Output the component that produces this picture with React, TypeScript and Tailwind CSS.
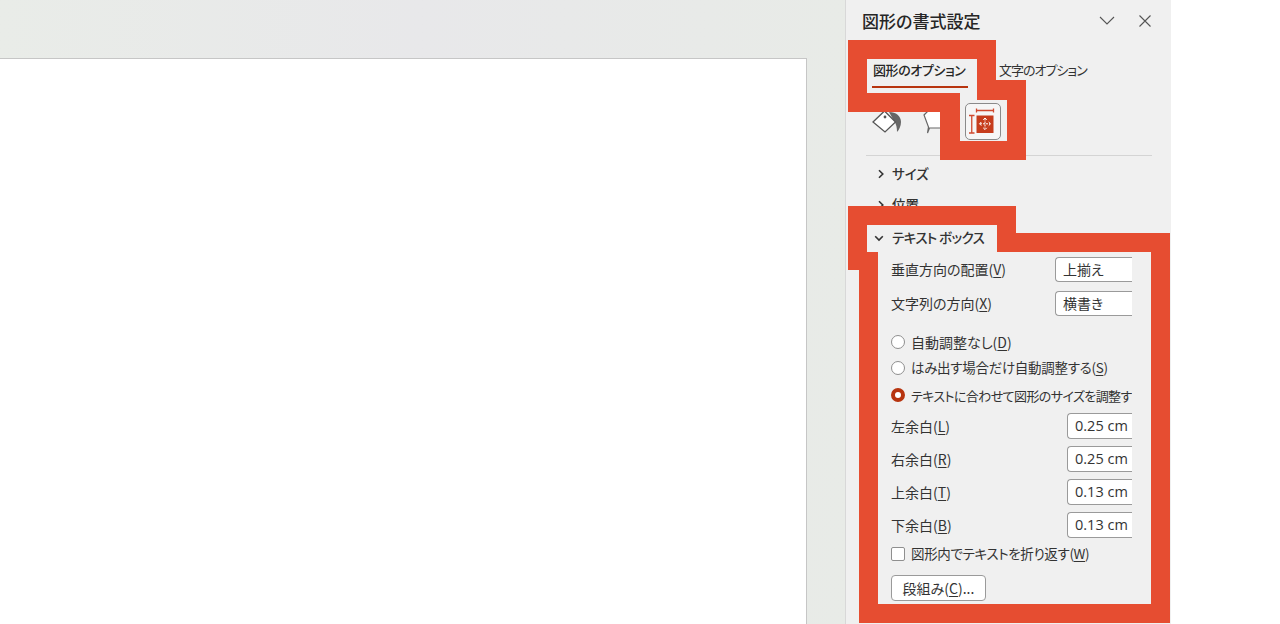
const fontStack = "font-['Noto_Sans_CJK_JP','Noto_Sans',sans-serif] [font-feature-settings:'palt']";

function Key({ label, k, tail = ")" }: { label: string; k: string; tail?: string }) {
  return (
    <span className="whitespace-nowrap">
      {label}(<span className="underline underline-offset-2">{k}</span>
      {tail}
    </span>
  );
}

function SelectRow({ label, k, value, className }: { label: string; k: string; value: string; className: string }) {
  return (
    <div className={`flex h-[25px] items-center justify-between ${className}`}>
      <span className="pb-[2px]">
        <Key label={label} k={k} />
      </span>
      <div className="flex h-[25px] w-[77px] shrink-0 items-center rounded-l-[4px] border border-r-0 border-[#9a9a9a] bg-white pb-[2px] pl-[7px] text-[#333]">
        {value}
      </div>
    </div>
  );
}

function MarginRow({ label, k, value, className }: { label: string; k: string; value: string; className: string }) {
  return (
    <div className={`flex h-[26px] items-center justify-between ${className}`}>
      <Key label={label} k={k} />
      <div className="flex h-[26px] w-[65px] shrink-0 items-center rounded-l-[4px] border border-r-0 border-[#9a9a9a] bg-white pl-[7px] font-['Open_Sans',sans-serif] text-[14.5px] text-[#333]">
        {value}
      </div>
    </div>
  );
}

function RadioRow({ label, k, on, className }: { label: string; k?: string; on?: boolean; className: string }) {
  return (
    <div className={`flex h-[20px] items-center gap-[6px] whitespace-nowrap ${className}`}>
      <span
        className={`h-[14px] w-[14px] shrink-0 rounded-full bg-white ${
          on ? "border-[4px] border-[#b7340f]" : "border border-[#8f8f8f]"
        }`}
      />
      {k ? <Key label={label} k={k} /> : <span>{label}</span>}
    </div>
  );
}

function Chevron({ open }: { open?: boolean }) {
  return (
    <svg width="10" height="10" viewBox="0 0 10 10" className="shrink-0" fill="none" stroke="#333" strokeWidth="1.6">
      {open ? <path d="M1.2 3.2 5 7l3.8-3.8" /> : <path d="M3 1.2 6.8 5 3 8.8" />}
    </svg>
  );
}

export default function App() {
  return (
    <div className={`relative flex h-[624px] w-[1280px] overflow-hidden bg-white ${fontStack}`}>
      {/* slide canvas */}
      <div className="h-full w-[845px] shrink-0 bg-linear-to-r from-[#e9ece8] via-[#e8e8ea] to-[#e8ebe7] pt-[58px]">
        <div className="h-full w-[807px] border-t border-r border-[#c6c6c6] bg-white" />
      </div>

      {/* format pane */}
      <div className="h-full w-[326px] shrink-0 border-l border-[#d8d8d8] bg-[#f0f0f0] text-[14px] leading-none text-[#333]">
        <div className="flex h-[42px] items-center pl-[16px] pr-[20px]">
          <span className="flex-1 pb-[2px] text-[17px] font-medium text-[#262626]">図形の書式設定</span>
          <svg width="16" height="10" viewBox="0 0 16 10" fill="none" stroke="#555" strokeWidth="1.1">
            <path d="M1 1l7 7 7-7" />
          </svg>
          <svg width="12" height="12" viewBox="0 0 12 12" fill="none" stroke="#555" strokeWidth="1.1" className="ml-[24px]">
            <path d="M.5.5l11 11M11.5.5l-11 11" />
          </svg>
        </div>

        <div className="mt-[21px] flex whitespace-nowrap pl-[26px] text-[13px] tracking-[-0.4px]">
          <div className="w-[96px] border-b-2 border-[#b7340f] pb-[10px] pl-[1px] font-medium text-[#262626]">
            図形のオプション
          </div>
          <div className="ml-[31px] tracking-[-1px] text-[#333]">文字のオプション</div>
        </div>

        <div className="mt-[14px] flex h-[38px] items-center pl-[26px]">
          <svg width="30" height="26" viewBox="0 0 30 26" fill="none">
            <path d="M17 4c7 0 12 4 12 10 0 4-2 8-4 10 0-4-.5-8-3-11Z" fill="#666" />
            <path d="M12.500 3 23.500 14 13 24 1 14Z" fill="#fff" stroke="#555" strokeWidth="1.3" />
            <circle cx="13" cy="9" r="1.4" fill="#555" />
          </svg>
          <svg width="22" height="26" viewBox="0 0 22 26" fill="none" className="ml-[20px]">
            <path d="M2 7 7 2H22V20H7.500L5.500 25 6.500 19Z" fill="#fff" stroke="#666" strokeWidth="1.2" />
          </svg>
          <div className="ml-[21px] flex h-[37px] w-[36px] items-center justify-center rounded-[5px] border border-[#8a8a8a] bg-[#f6f6f6]">
            <svg width="28" height="28" viewBox="0 0 28 28" fill="none" className="mr-[2px]">
              <path d="M8.500 3.500h17M8.500 1.500v4M25.500 1.500v4M1 8.500h5.500M1 26h5.500M3.750 8.500V26" stroke="#d0492f" strokeWidth="1.3" />
              <rect x="8.500" y="8.500" width="17" height="17.500" fill="#c63c1c" />
              <path d="M17 11.500v10M12 16.800h10" stroke="#fff" strokeWidth="1" strokeDasharray="2 1" />
              <path d="M15.200 12.800 17 11l1.800 1.800M15.200 20.800 17 22.600l1.800-1.800M13.300 15 11.500 16.800l1.800 1.800M20.700 15l1.800 1.800-1.800 1.800" stroke="#fff" strokeWidth="1" />
            </svg>
          </div>
        </div>

        <div className="ml-[20px] mr-[19px] mt-[15px] border-t border-[#d4d4d4]" />

        <div className="mt-[10px] flex h-[16px] items-center gap-[6px] pl-[30px] text-[13.5px] font-medium">
          <Chevron />
          <span>サイズ</span>
        </div>
        <div className="mt-[15px] flex h-[16px] items-center gap-[6px] pl-[30px] text-[13.5px] font-medium">
          <Chevron />
          <span>位置</span>
        </div>
        <div className="mt-[17px] flex h-[16px] items-center gap-[8px] pl-[28px] text-[13.5px] font-medium tracking-[-0.6px]">
          <Chevron open />
          <span>テキスト ボックス</span>
        </div>

        {/* text box section; its right side is cut off by the pane */}
        <div className="ml-[45px] mt-[11px] w-[241px] overflow-hidden">
          <SelectRow label="垂直方向の配置" k="V" value="上揃え" className="" />
          <SelectRow label="文字列の方向" k="X" value="横書き" className="mt-[9px]" />
          <RadioRow label="自動調整なし" k="D" className="mt-[16px]" />
          <RadioRow label="はみ出す場合だけ自動調整する" k="S" className="mt-[6px] text-[13.5px] tracking-[-0.3px]" />
          <RadioRow label="テキストに合わせて図形のサイズを調整す" on className="mt-[7px] text-[13px] tracking-[-0.6px]" />
          <MarginRow label="左余白" k="L" value="0.25 cm" className="mt-[8px]" />
          <MarginRow label="右余白" k="R" value="0.25 cm" className="mt-[7px]" />
          <MarginRow label="上余白" k="T" value="0.13 cm" className="mt-[7px]" />
          <MarginRow label="下余白" k="B" value="0.13 cm" className="mt-[7px]" />
          <div className="mt-[6px] flex h-[20px] items-center gap-[6px] whitespace-nowrap text-[13.5px] tracking-[-0.35px]">
            <span className="h-[14px] w-[14px] shrink-0 rounded-[2px] border border-[#8f8f8f] bg-white" />
            <Key label="図形内でテキストを折り返す" k="W" />
          </div>
          <button className="mt-[11px] flex h-[26px] w-[95px] items-center justify-center rounded-[4px] border border-[#9a9a9a] bg-white text-[#333]">
            <Key label="段組み" k="C" tail=")..." />
          </button>
        </div>
      </div>

      {/* red callouts drawn over the screenshot */}
      <svg width="1280" height="624" viewBox="0 0 1280 624" className="pointer-events-none absolute left-0 top-0">
        <path
          fillRule="evenodd"
          fill="#e64d31"
          d="M848 40H996V80H1026V160H940V112H848ZM867 59V93H960V141H1007V100H977V59Z"
        />
        <path
          fillRule="evenodd"
          fill="#e64d31"
          d="M848 206H1016V233H1170V623H859V270H848ZM867 225V252H878V604H1151V252H997V225Z"
        />
      </svg>
    </div>
  );
}
